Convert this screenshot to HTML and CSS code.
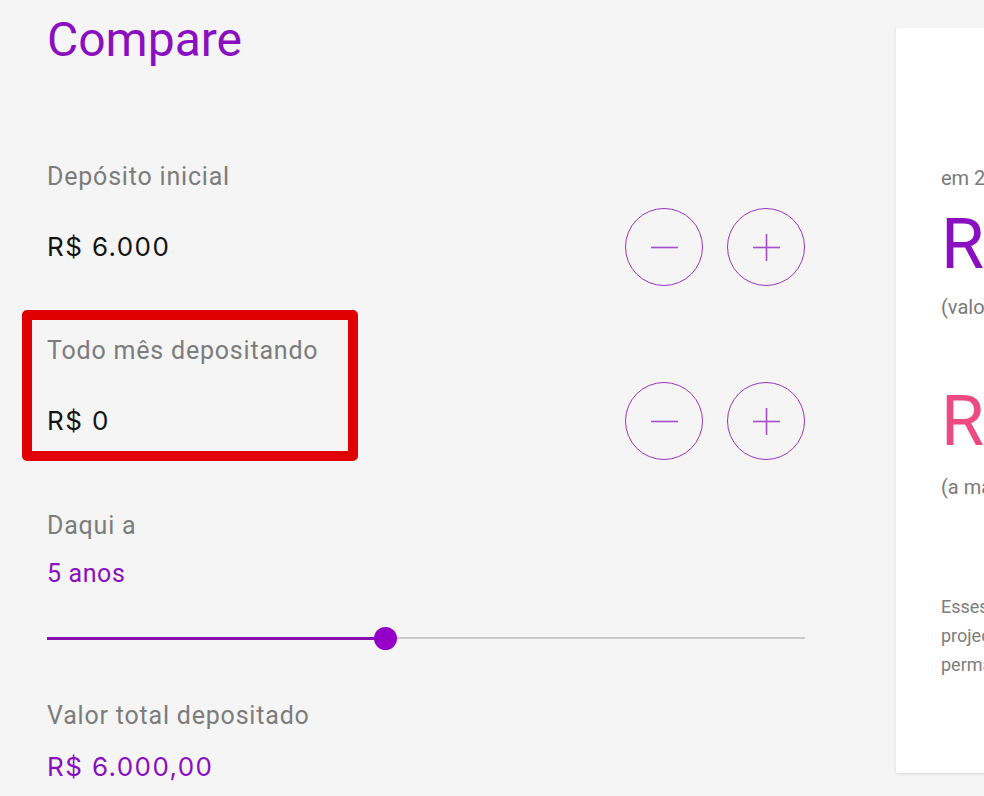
FILE: index.html
```html
<!DOCTYPE html>
<html lang="pt-BR">
<head>
<meta charset="utf-8">
<title>Compare</title>
<link rel="stylesheet" href="styles.css">
</head>
<body>
<div class="page">
  <main class="calc">
    <h1 class="title">Compare</h1>

    <section class="field field-first">
      <div class="label">Depósito inicial</div>
      <div class="field-row">
        <div class="value">R$ 6.000</div>
        <div class="steppers">
          <button class="step" aria-label="Diminuir"><svg viewBox="0 0 78 78" width="78" height="78"><line x1="25" y1="39" x2="53" y2="39"/></svg></button>
          <button class="step" aria-label="Aumentar"><svg viewBox="0 0 78 78" width="78" height="78"><line x1="25" y1="39" x2="53" y2="39"/><line x1="39" y1="25" x2="39" y2="53"/></svg></button>
        </div>
      </div>
    </section>

    <section class="field">
      <div class="label">Todo mês depositando</div>
      <div class="field-row">
        <div class="value">R$ 0</div>
        <div class="steppers">
          <button class="step" aria-label="Diminuir"><svg viewBox="0 0 78 78" width="78" height="78"><line x1="25" y1="39" x2="53" y2="39"/></svg></button>
          <button class="step" aria-label="Aumentar"><svg viewBox="0 0 78 78" width="78" height="78"><line x1="25" y1="39" x2="53" y2="39"/><line x1="39" y1="25" x2="39" y2="53"/></svg></button>
        </div>
      </div>
    </section>

    <section class="period">
      <div class="label">Daqui a</div>
      <div class="accent">5 anos</div>
      <div class="slider">
        <div class="track"><div class="fill" style="width:338px"></div><div class="thumb"></div></div>
      </div>
    </section>

    <section class="total">
      <div class="label">Valor total depositado</div>
      <div class="total-value">R$ 6.000,00</div>
    </section>
  </main>

  <aside class="card">
    <div class="small">em 2024 você terá</div>
    <div class="big big-purple">R$ 7.538,21</div>
    <div class="small">(valor líquido na NuConta)</div>
    <div class="big big-pink">R$ 1.050,36</div>
    <div class="small">(a mais do que na poupança)</div>
    <p class="note">Esses valores são simulações<br>projeções feitas com base no CDI atual e<br>permanecem sujeitas a variações.</p>
  </aside>

  <div class="highlight"></div>
</div>
</body>
</html>
```

FILE: styles.css
```css
html, body {
  margin: 0;
  padding: 0;
}
body {
  background: #f5f5f5;
  font-family: Roboto, "Liberation Sans", Arial, sans-serif;
  overflow: hidden;
  width: 984px;
  height: 796px;
}
.page {
  position: relative;
  display: flex;
  padding-left: 47px;
}
.calc {
  width: 758px;
  flex: none;
  margin-right: 91px;
}
.title {
  margin: 12px 0 0;
  font-size: 48px;
  line-height: 56px;
  font-weight: 400;
  color: #8a0fc0;
}
.label {
  font-size: 25px;
  line-height: 30px;
  color: #7c7c7c;
  letter-spacing: 0.8px;
}
.field {
  margin-top: 50px;
}
.field-first {
  margin-top: 94px;
}
.field-row {
  display: flex;
  align-items: center;
  justify-content: space-between;
  margin-top: 16px;
}
.value {
  font-family: Inter, Roboto, "Liberation Sans", sans-serif;
  font-size: 26px;
  line-height: 30px;
  color: #141414;
  letter-spacing: 1.4px;
}
.steppers {
  display: flex;
  gap: 24px;
}
.step {
  width: 78px;
  height: 78px;
  padding: 0;
  border: 1.6px solid #9636c0;
  border-radius: 50%;
  background: transparent;
  display: flex;
  align-items: center;
  justify-content: center;
}
.step svg {
  display: block;
  width: 75px;
  height: 75px;
}
.step line {
  stroke: #a64fcb;
  stroke-width: 1.7;
}
.period {
  margin-top: 51px;
}
.accent {
  font-size: 25px;
  line-height: 30px;
  color: #8a0fc0;
  margin-top: 18px;
  letter-spacing: 0.6px;
}
.slider {
  margin-top: 37px;
  height: 24px;
  display: flex;
  align-items: center;
}
.track {
  position: relative;
  width: 100%;
  height: 2px;
  background: #cbcbcb;
}
.fill {
  position: absolute;
  left: 0;
  top: -0.5px;
  height: 3px;
  background: #8a0fb0;
}
.thumb {
  position: absolute;
  left: 326.5px;
  top: -10.5px;
  width: 23px;
  height: 23px;
  border-radius: 50%;
  background: #9400c8;
}
.total {
  margin-top: 51px;
}
.total-value {
  font-family: Inter, Roboto, "Liberation Sans", sans-serif;
  font-size: 26px;
  line-height: 30px;
  color: #8a0fc0;
  margin-top: 21px;
  letter-spacing: 1.4px;
}
.card {
  flex: none;
  width: 360px;
  height: 745px;
  margin-top: 28px;
  background: #fff;
  box-shadow: 0 1px 3px rgba(0, 0, 0, 0.12);
  padding: 138px 0 0 45px;
  box-sizing: border-box;
  white-space: nowrap;
}
.small {
  font-size: 20px;
  line-height: 24px;
  color: #7a7a7a;
}
.big {
  font-size: 70px;
  line-height: 80px;
  font-weight: 400;
}
.big-purple {
  color: #8a0fc0;
  margin: 14px 0 11px;
}
.big-pink {
  color: #ec4a80;
  margin: 62px 0 14px;
}
.note {
  margin: 93px 0 0;
  font-size: 18px;
  line-height: 29px;
  color: #7d7d7d;
}
.highlight {
  position: absolute;
  left: 22px;
  top: 310px;
  width: 336px;
  height: 151px;
  box-sizing: border-box;
  border: 10px solid #e10000;
  border-radius: 5px;
  pointer-events: none;
}
```
